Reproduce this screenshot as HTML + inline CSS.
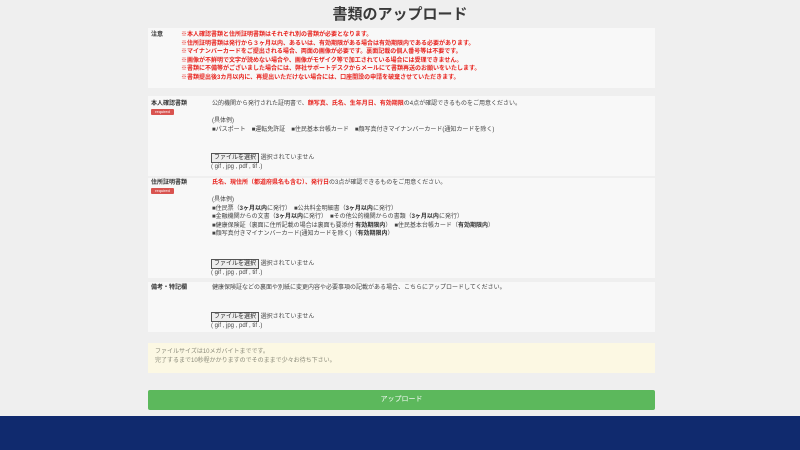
<!DOCTYPE html>
<html><head><meta charset="utf-8"><style>
*{margin:0;padding:0;box-sizing:border-box}
body{width:800px;height:450px;background:#efefef;font-family:"Liberation Sans","Noto Sans CJK JP",sans-serif;color:#444;position:relative;overflow:hidden;font-size:6px}
.a{position:absolute;white-space:nowrap;line-height:8px}
.p{position:absolute;left:148px;width:507px;background:#f8f8f8}
.r{color:#e8231e;font-weight:bold}
.lb{font-weight:bold;color:#333}
.req{position:absolute;left:151px;width:23px;height:6px;background:#d9534f;color:#fff;font-size:4px;line-height:6px;text-align:center;border-radius:1px}
.btn{display:inline-block;border:1px solid #555;background:#eee;padding:0 2px;line-height:8px;color:#222;font-size:6px}
b{color:#333}
</style></head><body>
<div class="a" style="left:0;width:800px;text-align:center;top:6px;font-size:15px;line-height:18px;color:#3a3a3a;font-weight:bold">書類のアップロード</div>
<div class="p" style="top:28px;height:60px"></div>
<div class="a lb" style="left:151px;top:31px">注意</div>
<div class="a r" style="left:181px;top:31px;line-height:8.5px">※本人確認書類と住所証明書類はそれぞれ別の書類が必要となります。<br>※住所証明書類は発行から３ヶ月以内、あるいは、有効期限がある場合は有効期限内である必要があります。<br>※マイナンバーカードをご提出される場合、両面の画像が必要です。裏面記載の個人番号等は不要です。<br>※画像が不鮮明で文字が読めない場合や、画像がモザイク等で加工されている場合には受理できません。<br>※書類に不備等がございました場合には、弊社サポートデスクからメールにて書類再送のお願いをいたします。<br>※書類提出後3カ月以内に、再提出いただけない場合には、口座開設の申請を破棄させていただきます。</div>

<div class="p" style="top:96px;height:80px"></div>
<div class="a lb" style="left:151px;top:100px">本人確認書類</div>
<div class="req" style="top:109px">required</div>
<div class="a" style="left:212px;top:100px">公的機関から発行された証明書で、<span class="r">顔写真、氏名、生年月日、有効期限</span>の4点が確認できるものをご用意ください。</div>
<div class="a" style="left:212px;top:117px;line-height:9px">(具体例)<br>■パスポート　■運転免許証　■住民基本台帳カード　■顔写真付きマイナンバーカード(通知カードを除く)</div>
<div class="a" style="left:211px;top:153px"><span class="btn">ファイルを選択</span> 選択されていません<br>( gif , jpg , pdf , tif .)</div>

<div class="p" style="top:178px;height:100px"></div>
<div class="a lb" style="left:151px;top:179px">住所証明書類</div>
<div class="req" style="top:188px">required</div>
<div class="a" style="left:212px;top:179px"><span class="r">氏名、現住所（都道府県名も含む）、発行日</span>の3点が確認できるものをご用意ください。</div>
<div class="a" style="left:212px;top:196px;line-height:8.5px">(具体例)<br>■住民票（<b>3ヶ月以内</b>に発行）　■公共料金明細書（<b>3ヶ月以内</b>に発行）<br>■金融機関からの文書（<b>3ヶ月以内</b>に発行）　■その他公的機関からの書類（<b>3ヶ月以内</b>に発行）<br>■健康保険証（裏面に住所記載の場合は裏面も要添付 <b>有効期限内</b>）　■住民基本台帳カード（<b>有効期限内</b>）<br>■顔写真付きマイナンバーカード(通知カードを除く)（<b>有効期限内</b>）</div>
<div class="a" style="left:211px;top:259px"><span class="btn">ファイルを選択</span> 選択されていません<br>( gif , jpg , pdf , tif .)</div>

<div class="p" style="top:282px;height:50px"></div>
<div class="a lb" style="left:151px;top:284px">備考・特記欄</div>
<div class="a" style="left:212px;top:284px">健康保険証などの裏面や別紙に変更内容や必要事項の記載がある場合、こちらにアップロードしてください。</div>
<div class="a" style="left:211px;top:312px"><span class="btn">ファイルを選択</span> 選択されていません<br>( gif , jpg , pdf , tif .)</div>

<div class="p" style="top:343px;height:30px;background:#fcf8e3"></div>
<div class="a" style="left:155px;top:348px;line-height:9px;color:#8a8a7a">ファイルサイズは10メガバイトまでです。<br>完了するまで10秒程かかりますのでそのままで少々お待ち下さい。</div>

<div class="p" style="top:390px;height:20px;background:#5cb85c;border-radius:2px;color:#fff;text-align:center;line-height:20px;font-size:7px">アップロード</div>
<div style="position:absolute;left:0;top:416px;width:800px;height:34px;background:#102a6e"></div>
</body></html>
